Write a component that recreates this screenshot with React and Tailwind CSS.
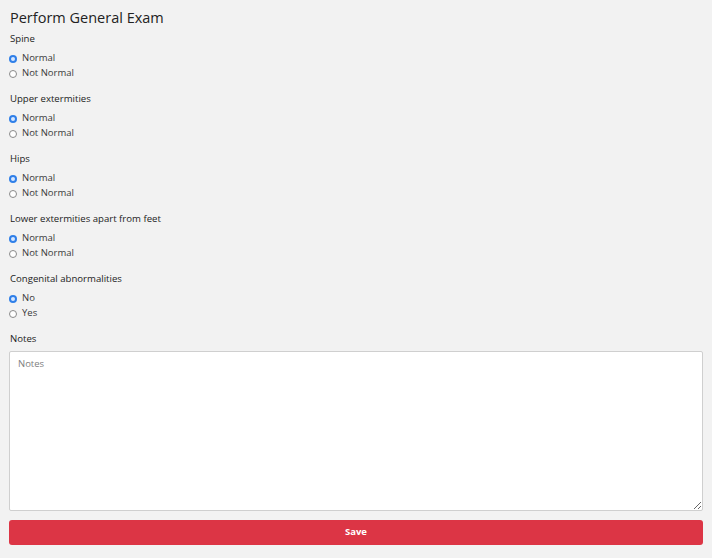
import React from "react";

const groups = [
  { label: "Spine", options: ["Normal", "Not Normal"] },
  { label: "Upper extermities", options: ["Normal", "Not Normal"] },
  { label: "Hips", options: ["Normal", "Not Normal"] },
  { label: "Lower extermities apart from feet", options: ["Normal", "Not Normal"] },
  { label: "Congenital abnormalities", options: ["No", "Yes"] },
];

const Radio = ({ checked, label }) => (
  <label className="flex items-center h-[15px] text-[9.5px] text-[#3a3a3a]">
    {checked ? (
      <span className="w-[8px] h-[8px] rounded-full bg-[#2f7fe8] flex items-center justify-center">
        <span className="w-[4px] h-[4px] rounded-full bg-[#d6e7ff]" />
      </span>
    ) : (
      <span className="w-[8px] h-[8px] rounded-full border border-[#8a8a8a] bg-white" />
    )}
    <span className="ml-[5px]">{label}</span>
  </label>
);

const App = () => {
  return (
    <div
      className="min-h-[558px] bg-[#f2f2f2] px-[9px] pt-[6px] pb-[13px] text-[#222]"
      style={{ fontFamily: '"Open Sans", "Noto Sans", sans-serif' }}
    >
      <h2 className="text-[14.5px] leading-[24px] ml-px">Perform General Exam</h2>
      {groups.map((g) => (
        <div key={g.label} className="mb-[9px]">
          <div className="text-[9.6px] leading-[16px] ml-px pt-px mb-[4px] font-medium">{g.label}</div>
          {g.options.map((o, i) => (
            <Radio key={o} label={o} checked={i === 0} />
          ))}
        </div>
      ))}
      <div className="text-[9.6px] leading-[16px] ml-px pt-px font-medium">Notes</div>
      <textarea
        placeholder="Notes"
        className="mt-[4px] block w-full h-[160px] bg-white border border-[#cfcfcf] rounded-[2px] px-[8px] py-[5px] text-[9.5px] placeholder:text-[#808080] outline-none"
      />
      <button className="mt-[9px] w-full h-[25px] bg-[#dc3545] rounded-[3px] text-white text-[9.5px] font-bold">
        Save
      </button>
    </div>
  );
};

export default App;
